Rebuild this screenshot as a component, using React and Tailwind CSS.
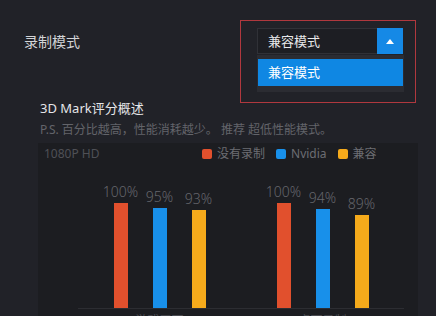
import React from "react";

const groups = [
  { label: "游戏画面", values: [100, 95, 93] },
  { label: "桌面录制", values: [100, 94, 89] },
];
const colors = ["bg-[#e1502d]", "bg-[#1890ea]", "bg-[#f5aa1b]"];

function Bar({ value, color }) {
  return (
    <div className="flex w-[39px] flex-col items-center">
      <div className="mb-[4px] whitespace-nowrap text-[14px] font-light leading-[14px] text-[#65666c]">
        {value}%
      </div>
      <div className={`w-[14px] ${color}`} style={{ height: `${Math.round(value * 1.05)}px` }} />
    </div>
  );
}

function Legend({ color, text }) {
  return (
    <div className="flex items-center">
      <span className={`h-[10px] w-[10px] rounded-[2px] ${color}`} />
      <span className="ml-[5px] text-[12px] leading-[16px] text-[#6c6d73]">{text}</span>
    </div>
  );
}

export default function App() {
  return (
    <div className="flex h-[316px] w-[436px] flex-col overflow-hidden bg-[#212228] font-['Noto_Sans','Noto_Sans_CJK_SC',sans-serif]">
      <div className="flex h-[99px] shrink-0 items-start">
        <div className="ml-[24px] mt-[32px] text-[14px] leading-[20px] text-[#d3d4d7]">录制模式</div>
        <div className="ml-auto mr-[20px] mt-[20px] h-[83px] w-[176px] shrink-0 border border-[#b0383e] pl-[16px] pt-[7px]">
          <div className="flex h-[26px] w-[146px]">
            <div className="flex-1 border border-r-0 border-[#303137] bg-[#1d1e23] pl-[10px] text-[13px] leading-[24px] text-[#e8e8ea]">
              兼容模式
            </div>
            <div className="flex w-[26px] items-center justify-center bg-[#1589e6]">
              <span className="h-0 w-0 border-b-[5px] border-l-[4.5px] border-r-[4.5px] border-b-white border-l-transparent border-r-transparent" />
            </div>
          </div>
          <div className="mt-[1px] w-[147px] bg-[#2b2c32] px-[1px] pb-[6px] pt-[4px]">
            <div className="h-[27px] bg-[#0f87e3] pl-[10px] text-[13px] leading-[27px] text-white">兼容模式</div>
          </div>
        </div>
      </div>

      <div className="pl-[40px]">
        <div className="text-[13px] leading-[18px] text-[#e6e6e8]">3D Mark评分概述</div>
        <div className="mt-[4px] text-[12px] leading-[18px] text-[#63646a]">
          P.S. 百分比越高，性能消耗越少。 推荐 超低性能模式。
        </div>
      </div>

      <div className="ml-[38px] mt-[4px] w-[380px] shrink-0 bg-[#1c1d21]">
        <div className="flex h-[22px] items-center pl-[6px]">
          <div className="w-[158px] text-[12px] leading-[16px] text-[#4f5056]">1080P HD</div>
          <div className="flex items-center gap-[11px]">
            <Legend color="bg-[#e1502d]" text="没有录制" />
            <Legend color="bg-[#1890ea]" text="Nvidia" />
            <Legend color="bg-[#f5aa1b]" text="兼容" />
          </div>
        </div>
        <div className="ml-[40px] grid h-[144px] w-[326px] grid-cols-2 border-b border-[#2c2d32]">
          {groups.map((g) => (
            <div key={g.label} className="flex items-end justify-center">
              {g.values.map((v, i) => (
                <Bar key={i} value={v} color={colors[i]} />
              ))}
            </div>
          ))}
        </div>
        <div className="ml-[40px] grid w-[326px] grid-cols-2 pt-[4px]">
          {groups.map((g) => (
            <div key={g.label} className="text-center text-[12px] leading-[16px] text-[#4a4b51]">
              {g.label}
            </div>
          ))}
        </div>
      </div>
    </div>
  );
}
